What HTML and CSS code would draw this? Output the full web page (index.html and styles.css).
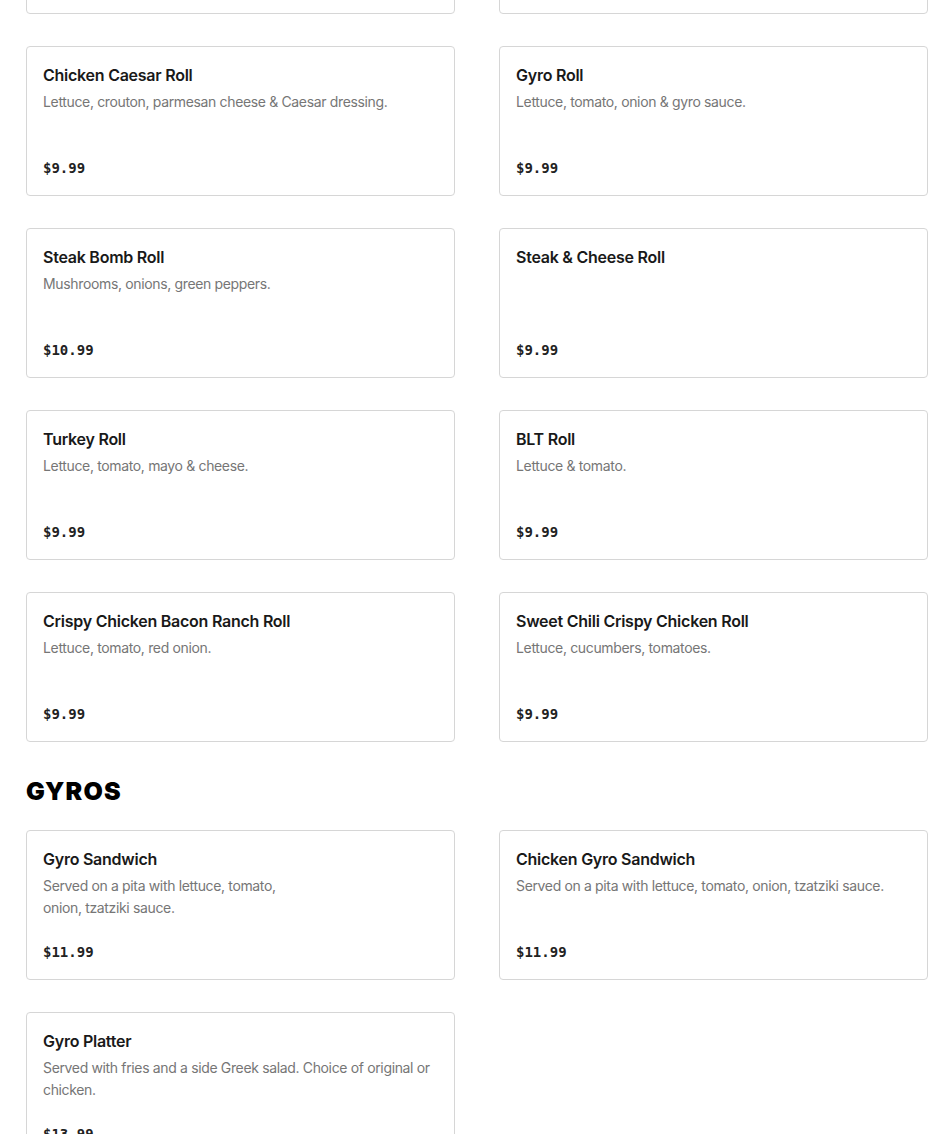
FILE: index.html
```html
<!DOCTYPE html>
<html lang="en">
<head>
<meta charset="utf-8">
<title>Menu</title>
<link rel="stylesheet" href="styles.css">
</head>
<body>
<main class="menu">
  <section class="section section-first">
    <div class="grid">
      <article class="card">
        <h3 class="card-title">Buffalo Chicken Roll</h3>
        <p class="card-desc">Lettuce, tomato &amp; buffalo sauce.</p>
        <p class="card-price">$9.99</p>
      </article>
      <article class="card">
        <h3 class="card-title">Chicken Roll</h3>
        <p class="card-desc">Lettuce, tomato, mayo.</p>
        <p class="card-price">$9.99</p>
      </article>
      <article class="card">
        <h3 class="card-title">Chicken Caesar Roll</h3>
        <p class="card-desc">Lettuce, crouton, parmesan cheese &amp; Caesar dressing.</p>
        <p class="card-price">$9.99</p>
      </article>
      <article class="card">
        <h3 class="card-title">Gyro Roll</h3>
        <p class="card-desc">Lettuce, tomato, onion &amp; gyro sauce.</p>
        <p class="card-price">$9.99</p>
      </article>
      <article class="card">
        <h3 class="card-title">Steak Bomb Roll</h3>
        <p class="card-desc">Mushrooms, onions, green peppers.</p>
        <p class="card-price">$10.99</p>
      </article>
      <article class="card">
        <h3 class="card-title">Steak &amp; Cheese Roll</h3>
        <p class="card-price">$9.99</p>
      </article>
      <article class="card">
        <h3 class="card-title">Turkey Roll</h3>
        <p class="card-desc">Lettuce, tomato, mayo &amp; cheese.</p>
        <p class="card-price">$9.99</p>
      </article>
      <article class="card">
        <h3 class="card-title">BLT Roll</h3>
        <p class="card-desc">Lettuce &amp; tomato.</p>
        <p class="card-price">$9.99</p>
      </article>
      <article class="card">
        <h3 class="card-title">Crispy Chicken Bacon Ranch Roll</h3>
        <p class="card-desc">Lettuce, tomato, red onion.</p>
        <p class="card-price">$9.99</p>
      </article>
      <article class="card">
        <h3 class="card-title">Sweet Chili Crispy Chicken Roll</h3>
        <p class="card-desc">Lettuce, cucumbers, tomatoes.</p>
        <p class="card-price">$9.99</p>
      </article>
    </div>
  </section>
  <section class="section">
    <h2 class="section-title">GYROS</h2>
    <div class="grid">
      <article class="card">
        <h3 class="card-title">Gyro Sandwich</h3>
        <p class="card-desc">Served on a pita with lettuce, tomato,<br>onion, tzatziki sauce.</p>
        <p class="card-price">$11.99</p>
      </article>
      <article class="card">
        <h3 class="card-title">Chicken Gyro Sandwich</h3>
        <p class="card-desc">Served on a pita with lettuce, tomato, onion, tzatziki sauce.</p>
        <p class="card-price">$11.99</p>
      </article>
      <article class="card">
        <h3 class="card-title">Gyro Platter</h3>
        <p class="card-desc">Served with fries and a side Greek salad. Choice of original or chicken.</p>
        <p class="card-price">$13.99</p>
      </article>
    </div>
  </section>
</main>
</body>
</html>
```
FILE: styles.css
```css
* { box-sizing: border-box; }
html, body { margin: 0; padding: 0; background: #fff; }
body {
  font-family: Inter, "Noto Sans", "Liberation Sans", sans-serif;
  color: #191919;
  overflow: hidden;
}
.menu {
  padding: 0 22px 0 26px;
}
.section-first {
  margin-top: -136px;
}
.section-title {
  margin: 34px 0 0;
  height: 54px;
  font-family: Inter, "Liberation Sans", sans-serif;
  font-weight: 900;
  font-size: 25px;
  line-height: 30px;
  letter-spacing: 1.1px;
  color: #000;
}
.grid {
  display: grid;
  grid-template-columns: 1fr 1fr;
  column-gap: 44px;
  row-gap: 32px;
}
.card {
  display: flex;
  flex-direction: column;
  min-height: 150px;
  padding: 16px 16px 17px;
  border: 1px solid #d6d6d6;
  border-radius: 4px;
  background: #fff;
}
.card-title {
  margin: 0;
  font-size: 16px;
  line-height: 24px;
  font-weight: 600;
  letter-spacing: -0.25px;
  color: #191919;
}
.card-desc {
  margin: 4px 0 0;
  font-size: 14px;
  line-height: 22px;
  letter-spacing: -0.35px;
  color: #767676;
}
.card-price {
  margin: auto 0 0;
  padding-top: 14px;
  font-family: "DejaVu Sans Mono", "Liberation Mono", monospace;
  font-weight: 700;
  font-size: 14px;
  line-height: 20px;
  color: #222;
}
```
